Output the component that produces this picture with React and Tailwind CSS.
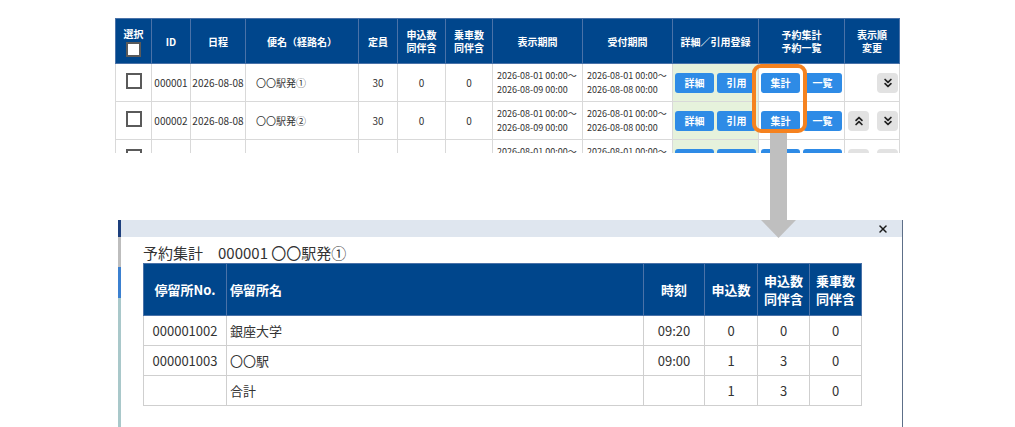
import React from 'react'
import { ChevronsDown, ChevronsUp, X } from 'lucide-react'

const trips = [
    { id: '000001', date: '2026-08-08', name: '〇〇駅発①', cap: '30', up: false },
    { id: '000002', date: '2026-08-08', name: '〇〇駅発②', cap: '30', up: true },
    // third row is cut off by the crop, only its top edge shows
    { id: '', date: '', name: '', cap: '', up: true, partial: true },
]

const stops = [
    { no: '000001002', name: '銀座大学', time: '09:20', a: 0, b: 0, c: 0 },
    { no: '000001003', name: '〇〇駅', time: '09:00', a: 1, b: 3, c: 0 },
    { no: '', name: '合計', time: '', a: 1, b: 3, c: 0 },
]

const Btn = ({ children }) => (
    <span className="inline-flex items-center justify-center w-[39px] h-[20px] rounded-[3px] bg-[#2e8be6] text-white text-[10px] font-bold">
        {children}
    </span>
)

const SortBtn = ({ up }) => (
    <span className="inline-flex items-center justify-center w-[21px] h-[20px] rounded-[4px] bg-[#e2e2e2] text-[#222]">
        {up ? <ChevronsUp size={14} strokeWidth={3} /> : <ChevronsDown size={14} strokeWidth={3} />}
    </span>
)

const Box = ({ size = 15 }) => (
    <span className="inline-block bg-white border-2 border-[#5a5a5a]" style={{ width: size, height: size }} />
)

const TripTable = () => {
    const th = 'bg-[#00468c] text-white font-bold text-[10px] leading-[13px] border border-[#4a72a8] text-center align-middle'
    const cell = 'border border-[#d9d9d9] leading-[14px] text-[#333] align-middle'
    const td = `${cell} text-[10px]`
    const tdTime = `${cell} text-[9px] pl-[4px] whitespace-nowrap`
    return (
        <div className="ml-[115px] mt-[18px] w-[785px] h-[135px] overflow-hidden">
            <table className="table-fixed border-collapse w-[784px]">
                <colgroup>
                    {[36, 39, 55, 113, 39, 48, 47, 90, 90, 86, 86, 55].map((w, i) => (
                        <col key={i} style={{ width: w }} />
                    ))}
                </colgroup>
                <thead>
                    <tr className="h-[45px]">
                        <th className={th}>
                            <div className="flex flex-col items-center gap-[2px] pt-[2px]">
                                <span>選択</span>
                                <Box size={15} />
                            </div>
                        </th>
                        <th className={th}>ID</th>
                        <th className={th}>日程</th>
                        <th className={th}>便名（経路名）</th>
                        <th className={th}>定員</th>
                        <th className={th}>申込数<br />同伴含</th>
                        <th className={th}>乗車数<br />同伴含</th>
                        <th className={th}>表示期間</th>
                        <th className={th}>受付期間</th>
                        <th className={th}>詳細／引用登録</th>
                        <th className={th}>予約集計<br />予約一覧</th>
                        <th className={th}>表示順<br />変更</th>
                    </tr>
                </thead>
                <tbody>
                    {trips.map((t, i) => (
                        <tr key={i} className="h-[38px]">
                            <td className={`${td} text-center`}><Box size={16} /></td>
                            <td className={`${td} text-center`}>{t.id}</td>
                            <td className={`${td} text-center`}>{t.date}</td>
                            <td className={`${td} pl-[10px]`}>{t.name}</td>
                            <td className={`${td} text-center`}>{t.cap}</td>
                            <td className={`${td} text-center`}>{t.partial ? '' : '0'}</td>
                            <td className={`${td} text-center`}>{t.partial ? '' : '0'}</td>
                            <td className={tdTime}>2026-08-01 00:00〜<br />2026-08-09 00:00</td>
                            <td className={tdTime}>2026-08-01 00:00〜<br />2026-08-08 00:00</td>
                            <td className={`${td} bg-[#e6f2dc]`}>
                                <div className="flex justify-center gap-[3px]"><Btn>詳細</Btn><Btn>引用</Btn></div>
                            </td>
                            <td className={td}>
                                <div className="flex justify-center gap-[3px]"><Btn>集計</Btn><Btn>一覧</Btn></div>
                            </td>
                            <td className={td}>
                                <div className="flex justify-end gap-[8px] pr-[1px]">
                                    {t.up && <SortBtn up />}
                                    <SortBtn />
                                </div>
                            </td>
                        </tr>
                    ))}
                </tbody>
            </table>
        </div>
    )
}

const SummaryDialog = () => {
    const th = 'bg-[#00468c] text-white font-bold text-[13px] leading-[18px] border border-[#4a72a8] align-middle'
    const td = 'border border-[#cfcfcf] text-[13px] text-[#333] align-middle'
    return (
        <div className="ml-[118px] mt-[67px] w-[785px] h-[207px] flex">
            {/* page behind the dialog peeking through */}
            <div className="w-[3px] flex flex-col">
                <div className="h-[17px] bg-[#1d3f7c]" />
                <div className="h-[30px] bg-[#bdbdbd]" />
                <div className="h-[31px] bg-[#3b80d0]" />
                <div className="flex-1 bg-[#a9c8ca]" />
            </div>
            <div className="flex-1 flex flex-col bg-white">
                <div className="h-[17px] bg-[#dfe6ef] flex items-center justify-end pr-[13px] text-[#1a1a1a]">
                    <X size={12} strokeWidth={3} />
                </div>
                <div className="pl-[22px] pt-[6px]">
                    <div className="text-[15px] leading-[20px] text-[#333]">予約集計　000001 〇〇駅発①</div>
                    <table className="table-fixed border-collapse w-[718px]">
                        <colgroup>
                            {[83, 417, 61, 53, 52, 52].map((w, i) => (
                                <col key={i} style={{ width: w }} />
                            ))}
                        </colgroup>
                        <thead>
                            <tr className="h-[52px]">
                                <th className={`${th} text-center`}>停留所No.</th>
                                <th className={`${th} text-left pl-[3px]`}>停留所名</th>
                                <th className={`${th} text-center`}>時刻</th>
                                <th className={`${th} text-center`}>申込数</th>
                                <th className={`${th} text-center`}>申込数<br />同伴含</th>
                                <th className={`${th} text-center`}>乗車数<br />同伴含</th>
                            </tr>
                        </thead>
                        <tbody>
                            {stops.map((s, i) => (
                                <tr key={i} className="h-[30px]">
                                    <td className={`${td} text-center`}>{s.no}</td>
                                    <td className={`${td} pl-[3px]`}>{s.name}</td>
                                    <td className={`${td} text-center`}>{s.time}</td>
                                    <td className={`${td} text-center`}>{s.a}</td>
                                    <td className={`${td} text-center`}>{s.b}</td>
                                    <td className={`${td} text-center`}>{s.c}</td>
                                </tr>
                            ))}
                        </tbody>
                    </table>
                </div>
            </div>
            <div className="w-[1px] bg-[#5d6f88]" />
        </div>
    )
}

export default function App() {
    return (
        <div className="relative w-[1015px] h-[427px] bg-white overflow-hidden font-['Noto_Sans_CJK_JP','Noto_Sans',sans-serif]">
            <TripTable />
            <SummaryDialog />

            {/* highlight + arrow */}
            <div className="absolute left-[752px] top-[64px] w-[55px] h-[69px] border-4 border-[#f5821f] rounded-[9px]" />
            <div className="absolute left-[770px] top-[133px] w-[17px] h-[87px] bg-[#bfbfbf]" />
            <svg className="absolute left-[761px] top-[220px]" width="35" height="18" viewBox="0 0 35 18">
                <polygon points="0,0 35,0 17.5,18" fill="#bfbfbf" />
            </svg>
        </div>
    )
}
